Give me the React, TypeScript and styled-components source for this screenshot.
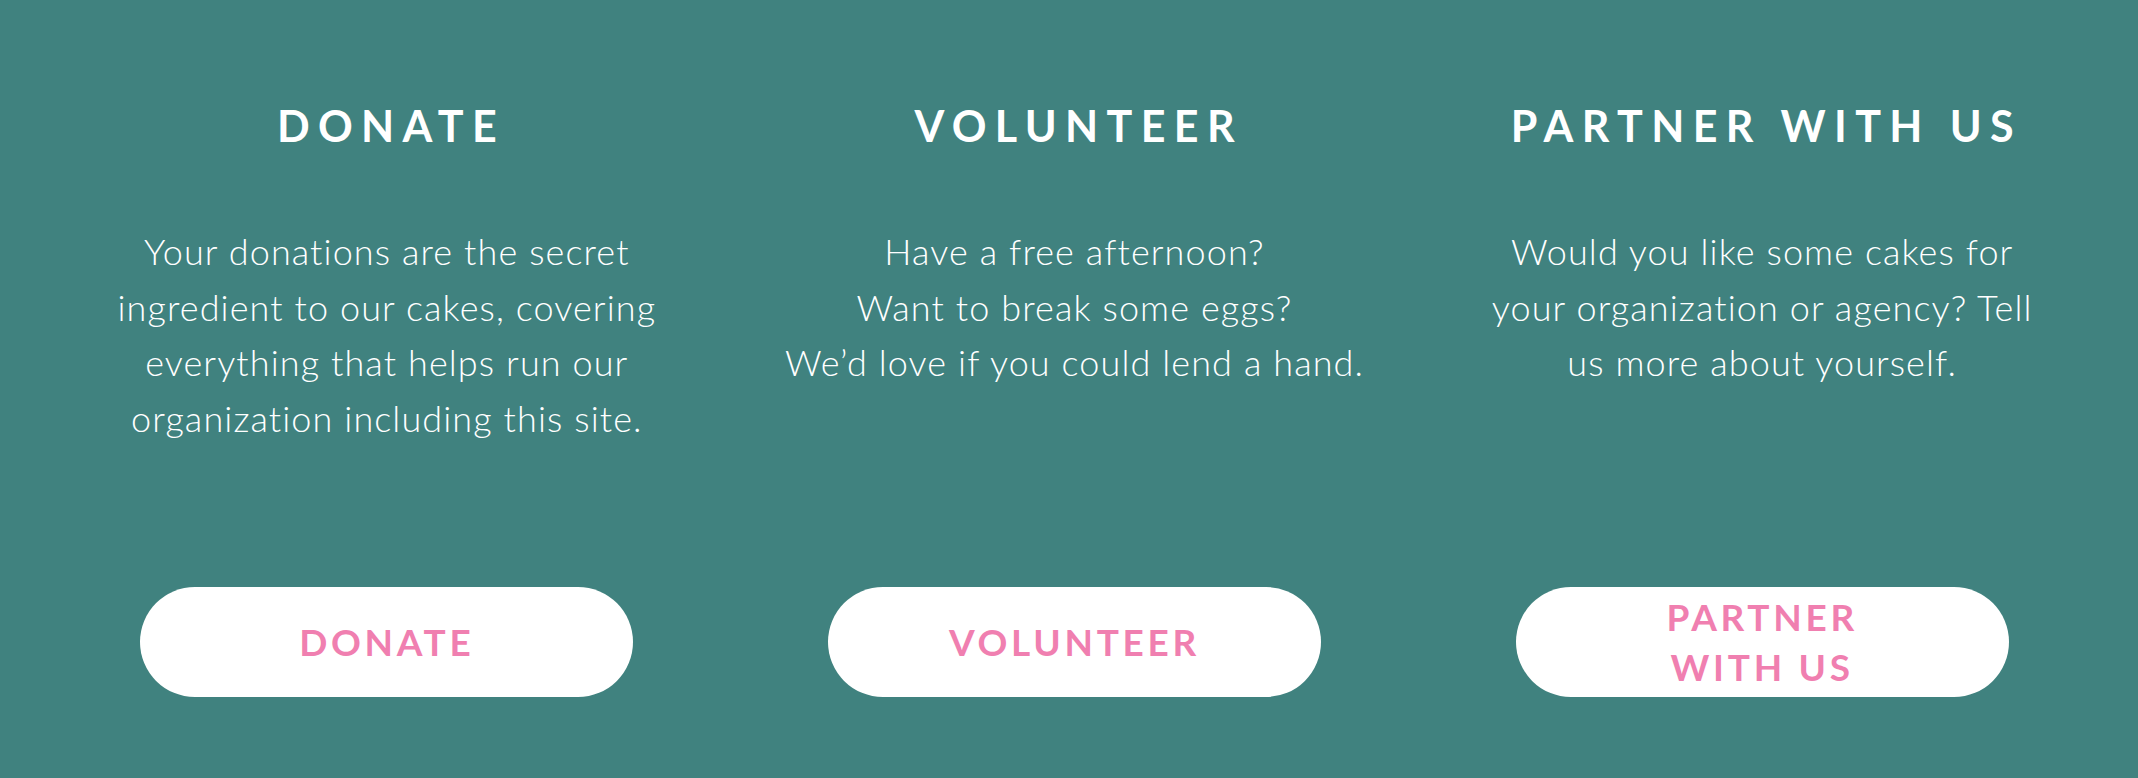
import React from 'react';
import styled, {createGlobalStyle} from 'styled-components';

const GlobalStyle = createGlobalStyle`
  html, body {
    margin: 0;
    padding: 0;
    background: #40827f;
  }
  * {
    box-sizing: border-box;
  }
`

const Section = styled.section`
  width: 2138px;
  height: 778px;
  padding: 100px 32px 81px 43px;
  background: #40827f;
  display: grid;
  grid-template-columns: repeat(3, 1fr);
  font-family: Lato, "Liberation Sans", sans-serif;
  color: #ffffff;
`

const Column = styled.div`
  display: flex;
  flex-direction: column;
  align-items: center;
  text-align: center;
`

const Heading = styled.h2`
  margin: 0;
  font-size: 43px;
  line-height: 52px;
  font-weight: 700;
  letter-spacing: 0.195em;
  margin-right: -0.195em;
  text-transform: uppercase;
`

const Text = styled.p`
  margin: 72px 0 0;
  font-size: 36px;
  line-height: 55.5px;
  font-weight: 300;
  letter-spacing: 1.1px;
  white-space: nowrap;
`

const Button = styled.a`
  margin-top: auto;
  width: 493px;
  height: 110px;
  padding: 0 80px;
  border-radius: 55px;
  background: #ffffff;
  color: #f07fb0;
  display: flex;
  align-items: center;
  justify-content: center;
  font-size: 37px;
  line-height: 50px;
  font-weight: 700;
  letter-spacing: 0.1em;
  text-transform: uppercase;
  text-decoration: none;
  cursor: pointer;
`

type Item = {
    title: string
    lines: string[]
    action: string[]
}

const items: Item[] = [
    {
        title: 'Donate',
        lines: [
            'Your donations are the secret',
            'ingredient to our cakes, covering',
            'everything that helps run our',
            'organization including this site.',
        ],
        action: ['Donate'],
    },
    {
        title: 'Volunteer',
        lines: [
            'Have a free afternoon?',
            'Want to break some eggs?',
            'We’d love if you could lend a hand.',
        ],
        action: ['Volunteer'],
    },
    {
        title: 'Partner with us',
        lines: [
            'Would you like some cakes for',
            'your organization or agency? Tell',
            'us more about yourself.',
        ],
        action: ['Partner', 'with us'],
    },
]

export default function App() {
    return (
        <>
            <GlobalStyle />
            <Section>
                {items.map(item => (
                    <Column key={item.title}>
                        <Heading>{item.title}</Heading>
                        <Text>
                            {item.lines.map((line, i) => (
                                <React.Fragment key={i}>
                                    {i > 0 && <br />}
                                    {line}
                                </React.Fragment>
                            ))}
                        </Text>
                        <Button>
                            <span>
                                {item.action.map((part, i) => (
                                    <React.Fragment key={i}>
                                        {i > 0 && <br />}
                                        {part}
                                    </React.Fragment>
                                ))}
                            </span>
                        </Button>
                    </Column>
                ))}
            </Section>
        </>
    );
}
